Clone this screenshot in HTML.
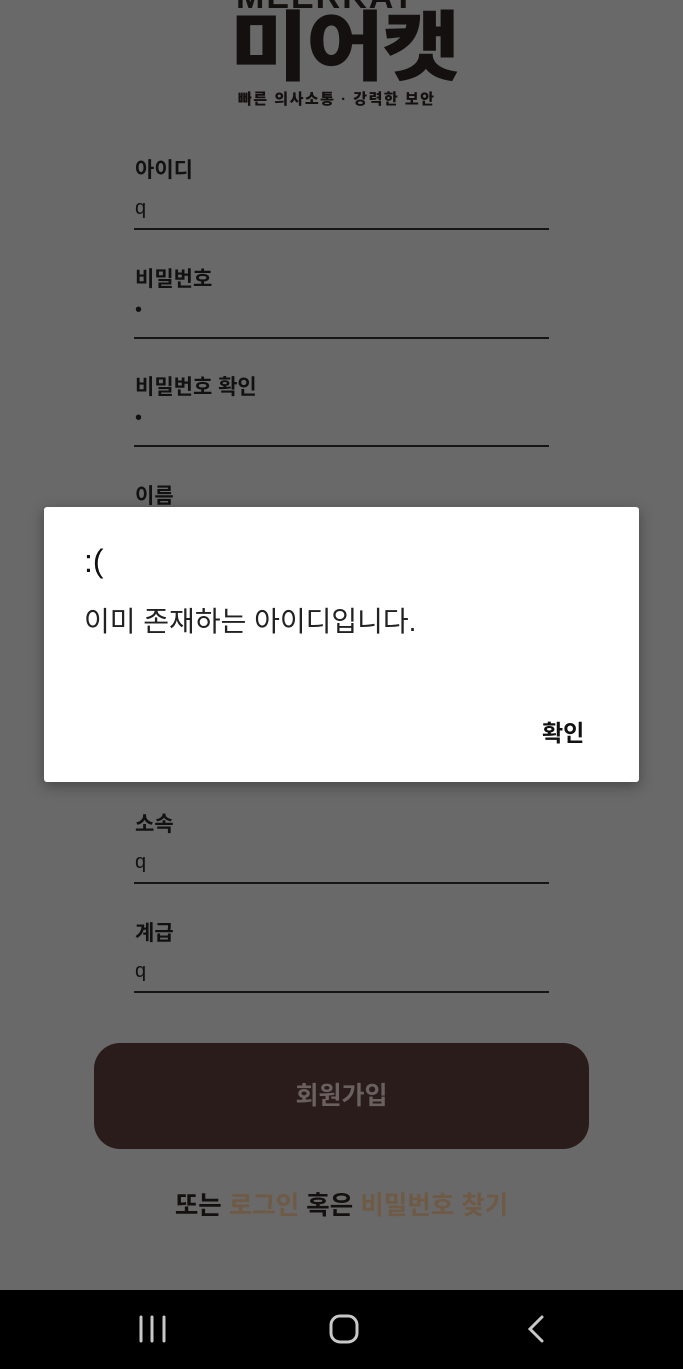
<!DOCTYPE html>
<html><head><meta charset="utf-8"><style>
*{margin:0;padding:0;box-sizing:border-box}
body{width:683px;height:1369px;background:#696969;position:relative;overflow:hidden;font-family:"Liberation Sans","Noto Sans CJK KR",sans-serif;color:#111}
.a{position:absolute}
.lbl{position:absolute;left:135px;font-size:21px;font-weight:bold;color:#111}
.val{position:absolute;left:135px;font-size:20px;color:#111}
.ln{position:absolute;left:134px;width:415px;height:2px;background:#151515}
</style></head><body>
<div class="a" style="left:236px;top:-22px;font-size:34px;font-weight:900;color:#141010;letter-spacing:2px">MEERKAT</div>
<div class="a" style="left:230px;top:4px;font-size:76px;font-weight:900;color:#141010;letter-spacing:-2px;line-height:90px;transform:scaleX(1.12);transform-origin:left">미어캣</div>
<div class="a" style="left:238px;top:88px;font-size:15px;font-weight:900;color:#141010;letter-spacing:1.5px">빠른 의사소통 · 강력한 보안</div>

<div class="lbl" style="top:154px">아이디</div><div class="val" style="top:197px">q</div><div class="ln" style="top:228px"></div>
<div class="lbl" style="top:263px">비밀번호</div><div class="val" style="top:299px">•</div><div class="ln" style="top:337px"></div>
<div class="lbl" style="top:371px">비밀번호 확인</div><div class="val" style="top:407px">•</div><div class="ln" style="top:445px"></div>
<div class="lbl" style="top:480px">이름</div>
<div class="lbl" style="top:808px">소속</div><div class="val" style="top:851px">q</div><div class="ln" style="top:882px"></div>
<div class="lbl" style="top:917px">계급</div><div class="val" style="top:960px">q</div><div class="ln" style="top:991px"></div>

<div class="a" style="left:94px;top:1043px;width:495px;height:106px;background:#2a1c1a;border-radius:26px;color:#6b6060;font-size:25px;font-weight:bold;text-align:center;line-height:106px">회원가입</div>
<div class="a" style="left:0;width:683px;top:1185px;text-align:center;font-size:25.5px;font-weight:bold;color:#141010">또는 <span style="color:#6e5a45">로그인</span> 혹은 <span style="color:#6e5a45">비밀번호 찾기</span></div>

<div class="a" style="left:44px;top:507px;width:595px;height:275px;background:#fff;border-radius:3px;box-shadow:0 4px 14px rgba(0,0,0,.35)">
<div class="a" style="left:40px;top:36px;font-size:32px;color:#111">:(</div>
<div class="a" style="left:40px;top:93px;font-size:28px;color:#222">이미 존재하는 아이디입니다.</div>
<div class="a" style="left:498px;top:207px;font-size:23px;font-weight:bold;color:#111">확인</div>
</div>

<div class="a" style="left:0;top:1290px;width:683px;height:79px;background:#000">
<svg width="683" height="79" style="position:absolute;left:0;top:0">
<g stroke="#c8c8c8" stroke-width="3" fill="none" stroke-linecap="round">
<path d="M141 27v24M152 27v24M164 27v24"/>
<rect x="331" y="26" width="26" height="26" rx="9"/>
<path d="M542 27l-12 12 12 12"/>
</g></svg>
</div>
</body></html>
